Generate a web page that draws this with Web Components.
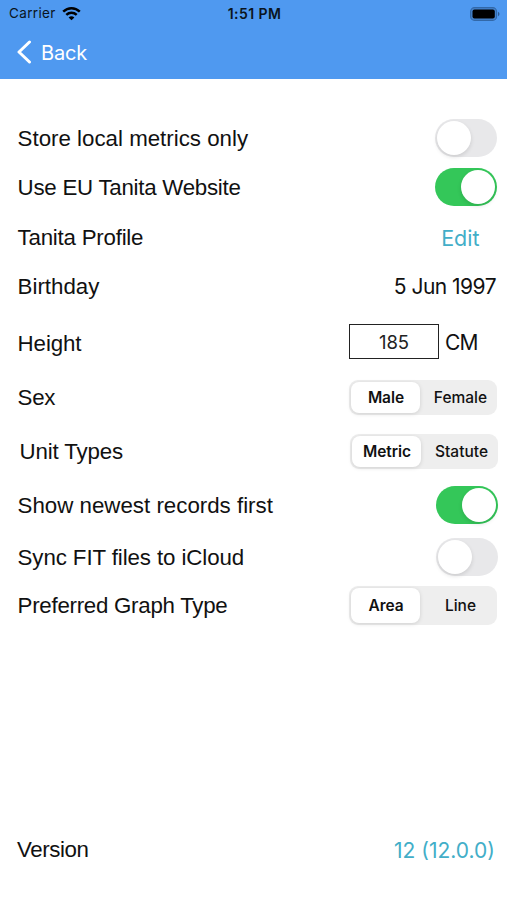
<!DOCTYPE html>
<html lang="en">
<head>
<meta charset="utf-8">
<title>Settings</title>
<style>
  html, body { margin: 0; height: 100%; background: #fff; }
  settings-screen { --link: #42aec8; --ui: Inter, "Liberation Sans", sans-serif; }
</style>
</head>
<body>
<settings-screen></settings-screen>
<script>
const define = (name, html, setup) => customElements.define(name, class extends HTMLElement {
  constructor() {
    super();
    this.attachShadow({ mode: 'open' }).innerHTML = html;
  }
  connectedCallback() { if (setup) setup(this, this.shadowRoot); }
});

define('status-bar', `
<style>
  :host { display: grid; grid-template-columns: 1fr auto 1fr; align-items: center; height: 27px; padding: 0 7px 0 9px; box-sizing: border-box;
    font: 400 13px/27px var(--ui); color: #0a1420; }
  .left { display: flex; align-items: center; gap: 6px; }
  .carrier { font-size: 13.500px; letter-spacing: .35px; }
  .time { font-weight: 600; font-size: 14px; letter-spacing: .45px; }
  .battery { justify-self: end; }
  svg { display: block; }
</style>
<div class="left"><span class="carrier">Carrier</span>
<svg width="19" height="14" viewBox="0 0 19 14" fill="none" stroke="#000" stroke-width="2.5">
  <path d="M1.2 4.700C6 .1 13 .1 17.8 4.700"/><path d="M4.3 7.900c3-2.8 7.400-2.800 10.400 0"/><path d="M9.500 13.300 6.600 10.400c1.700-1.500 4.100-1.500 5.800 0z" fill="#000" stroke="none"/>
</svg></div>
<span class="time">1:51 PM</span>
<svg class="battery" width="30" height="14" viewBox="0 0 30 14">
  <rect x=".6" y=".6" width="26" height="12.800" rx="4" fill="#4482cc" stroke="#3268a8" stroke-width="1.100"/>
  <rect x="2.500" y="2.500" width="22.300" height="9" rx="2" fill="#000"/>
  <path d="M28 4.800c2 .8 2 3.600 0 4.400z" fill="#2c5b94"/>
</svg>`);

define('nav-bar', `
<style>
  :host { display: flex; align-items: center; height: 52px; padding: 0 17px 2px; box-sizing: border-box; gap: 9px;
    font: 400 20px/24px var(--ui); color: #fff; }
  svg { display: block; }
  span { letter-spacing: -.15px; padding-top: 1px; }
</style>
<svg width="15" height="24" viewBox="0 0 15 24" fill="none" stroke="#fff" stroke-width="3" stroke-linecap="round" stroke-linejoin="round"><path d="M12.500 2 2 12l10.500 10"/></svg>
<span><slot></slot></span>`);

define('setting-row', `
<style>
  :host { display: flex; align-items: center; justify-content: space-between; box-sizing: border-box;
    height: var(--h); padding: 0 var(--end, 10px) 0 var(--start, 17.600px); }
  .label { font: 400 22.3px/26px "Liberation Sans", Arial, sans-serif; color: #111; white-space: nowrap; padding-top: var(--drop, 1px);
    letter-spacing: var(--track, 0px); }
  .value { display: flex; align-items: center; }
</style>
<span class="label"></span><div class="value"><slot></slot></div>`,
(el, root) => { root.querySelector('.label').textContent = el.getAttribute('label'); });

define('toggle-switch', `
<style>
  :host { display: flex; box-sizing: border-box; width: 62px; height: 38px; padding: 2px; border-radius: 19px; background: #e8e8ea; }
  :host([on]) { background: #34c759; justify-content: flex-end; }
  i { width: 34px; height: 34px; border-radius: 50%; background: #fff; box-shadow: 0 2px 4px rgba(0,0,0,.12); }
</style><i></i>`);

define('segment-control', `
<style>
  :host { display: grid; grid-template-columns: 69px 1fr; box-sizing: border-box; width: 148px; height: var(--seg, 35px); padding: 2px;
    border-radius: 9px; background: #eee; font: 500 15.500px/20px var(--ui); color: #111; }
  span { display: flex; align-items: center; justify-content: center; border-radius: 8px; padding-top: 1px; }
  .on { background: #fff; box-shadow: 0 1px 4px rgba(0,0,0,.13); font-weight: 600; padding-left: 1px; letter-spacing: -.05px; }
  .off { padding-left: 6px; }
</style><span class="on"></span><span class="off"></span>`,
(el, root) => {
  const [on, off] = el.getAttribute('options').split(',');
  root.querySelector('.on').textContent = on;
  root.querySelector('.off').textContent = off;
});

define('value-text', `
<style>
  :host { display: block; font: 400 21px/26px var(--ui); color: #111; white-space: nowrap; letter-spacing: var(--value-track, 0px);
    padding-top: var(--value-drop, 1px); }
  :host([link]) { color: var(--link); }
</style><slot></slot>`);

define('number-box', `
<style>
  :host { display: flex; align-items: center; justify-content: center; box-sizing: border-box; width: 90px; height: 35px;
    border: 1px solid #222; font: 400 18.500px/24px var(--ui); color: #222; margin-right: 6px; letter-spacing: 0; }
</style><slot></slot>`);

define('settings-screen', `
<style>
  :host { display: flex; flex-direction: column; height: 900px; width: 507px; overflow: hidden; }
  header { background: #4f99f0; height: 79px; flex: none; }
  main { flex: 1; display: flex; flex-direction: column; padding: 34px 0 31px; }
  .spacer { flex: 1; }
</style>
<header><status-bar></status-bar><nav-bar>Back</nav-bar></header>
<main>
  <setting-row label="Store local metrics only" style="--h:49px;--drop:2px"><toggle-switch></toggle-switch></setting-row>
  <setting-row label="Use EU Tanita Website" style="--h:49px;--drop:2px;--track:-.26px"><toggle-switch on></toggle-switch></setting-row>
  <setting-row label="Tanita Profile" style="--h:51px;--end:27.500px;--drop:2px;--track:-.23px;--value-drop:3px"><value-text link style="font-size:21.500px">Edit</value-text></setting-row>
  <setting-row label="Birthday" style="--h:49px;--end:11px;--value-track:-.53px"><value-text>5 Jun 1997</value-text></setting-row>
  <setting-row label="Height" style="--h:61px;--drop:5px;--end:29.500px;--track:-.1px;--value-track:-.9px;--value-drop:3px"><number-box>185</number-box><value-text>CM</value-text></setting-row>
  <setting-row label="Sex" style="--h:51px;--track:-.3px"><segment-control options="Male,Female"></segment-control></setting-row>
  <setting-row label="Unit Types" style="--h:56px;--start:19.600px;--end:9px;--track:-.15px"><segment-control options="Metric,Statute"></segment-control></setting-row>
  <setting-row label="Show newest records first" style="--h:51px;--end:9px;--drop:2px"><toggle-switch on></toggle-switch></setting-row>
  <setting-row label="Sync FIT files to iCloud" style="--h:53px;--end:9px;--drop:2px;--track:-.1px"><toggle-switch></toggle-switch></setting-row>
  <setting-row label="Preferred Graph Type" style="--h:44px;--drop:2px;--track:-.27px"><segment-control options="Area,Line" style="--seg:39px"></segment-control></setting-row>
  <div class="spacer"></div>
  <setting-row label="Version" style="--h:40px;--start:17px;--end:12px;--track:-.4px;--value-drop:3px"><value-text link>12 (12.0.0)</value-text></setting-row>
</main>`);
</script>
</body>
</html>
